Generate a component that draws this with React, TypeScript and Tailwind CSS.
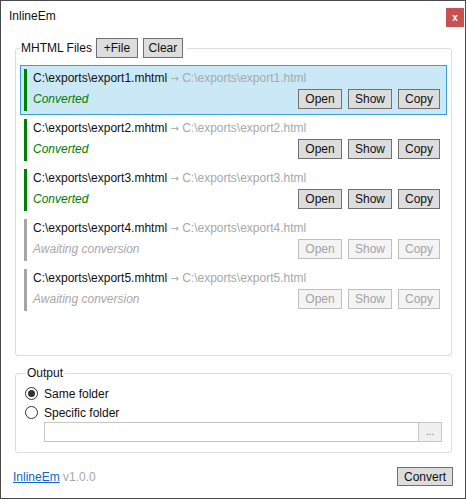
import { useState } from "react";

type Job = { name: string; done: boolean };

const JOBS: Job[] = [
  { name: "export1", done: true },
  { name: "export2", done: true },
  { name: "export3", done: true },
  { name: "export4", done: false },
  { name: "export5", done: false },
];

function WinButton({
  label,
  w,
  disabled,
}: {
  label: string;
  w: string;
  disabled?: boolean;
}) {
  return (
    <button
      disabled={disabled}
      className={`${w} h-[20px] border text-[12px] leading-[16px] ${
        disabled
          ? "border-[#bfbfbf] bg-[#f4f4f4] text-[#a3a3a3]"
          : "border-[#707070] bg-[#dddddd] text-[#111]"
      }`}
    >
      {label}
    </button>
  );
}

function Radio({ on, label }: { on: boolean; label: string }) {
  return (
    <div className="flex h-[19px] items-center gap-[6px]">
      <span className="flex h-[13px] w-[13px] items-center justify-center rounded-full border border-[#333] bg-white">
        {on && <span className="h-[7px] w-[7px] rounded-full bg-[#333]" />}
      </span>
      <span className="text-[12px] leading-[16px] text-[#111]">{label}</span>
    </div>
  );
}

export default function App() {
  const [selected] = useState(0);

  return (
    <div className="flex h-[499px] w-[466px] flex-col border border-[#4a4a4a] bg-white font-['Liberation_Sans',Arial,sans-serif] text-[12px] text-[#111]">
      {/* title bar */}
      <div className="flex h-[37px] shrink-0 items-start justify-between pl-[8px] pr-[1px] pt-[7px]">
        <span className="leading-[16px]">InlineEm</span>
        <button className="flex h-[19px] w-[18px] items-center justify-center bg-[#c75050] text-[10px] font-bold leading-none text-white">
          x
        </button>
      </div>

      {/* files */}
      <fieldset className="ml-[14px] h-[318px] w-[437px] shrink-0 rounded-[3px] border border-[#d5dfe5] px-[4px] pt-[7px]">
        <legend className="flex items-center gap-[4px] px-[1px]">
          <span className="leading-[16px]">MHTML Files</span>
          <span className="flex gap-[5px] pr-[3px]">
            <WinButton label="+File" w="w-[42px]" />
            <WinButton label="Clear" w="w-[40px]" />
          </span>
        </legend>

        <div className="flex flex-col">
          {JOBS.map((job, i) => {
            const sel = i === selected;
            return (
              <div
                key={job.name}
                className={`flex h-[50px] gap-[6px] border px-[3px] py-[3px] ${
                  sel ? "border-[#3a9fd9] bg-[#cbe8f6]" : "border-transparent"
                }`}
              >
                <span className={`w-[3px] shrink-0 ${job.done ? "bg-[#008000]" : "bg-[#a6a6a6]"}`} />
                <div className="flex flex-1 flex-col pr-[3px]">
                  <div className="mt-[1px] whitespace-nowrap leading-[16px]">
                    C:\exports\{job.name}.mhtml
                    <span className="text-[#a8a8a8]">
                      {" "}
                      <span className="font-['DejaVu_Sans',sans-serif] text-[10px]">→</span> C:\exports\{job.name}.html
                    </span>
                  </div>
                  <div className="mt-[2px] flex items-center justify-between">
                    <span
                      className={`italic leading-[16px] ${job.done ? "text-[#008000]" : "text-[#a8a8a8]"}`}
                    >
                      {job.done ? "Converted" : "Awaiting conversion"}
                    </span>
                    <div className="flex gap-[6px]">
                      <WinButton label="Open" w="w-[44px]" disabled={!job.done} />
                      <WinButton label="Show" w="w-[44px]" disabled={!job.done} />
                      <WinButton label="Copy" w="w-[42px]" disabled={!job.done} />
                    </div>
                  </div>
                </div>
              </div>
            );
          })}
        </div>
      </fieldset>

      {/* output */}
      <fieldset className="ml-[14px] mt-[9px] w-[437px] shrink-0 rounded-[3px] border border-[#d5dfe5] pb-[10px] pl-[9px] pr-[9px] pt-[3px]">
        <legend className="px-[2px] leading-[16px]">Output</legend>
        <Radio on label="Same folder" />
        <Radio on={false} label="Specific folder" />
        <div className="ml-[19px] flex h-[20px]">
          <div className="flex-1 border border-[#c6c6c6] bg-white" />
          <button className="w-[23px] border border-l-0 border-[#c6c6c6] bg-[#f0f0f0] text-[10px] leading-none text-[#777]">
            ...
          </button>
        </div>
      </fieldset>

      {/* footer */}
      <div className="mt-[14px] flex items-center justify-between px-[12px]">
        <div className="leading-[16px]">
          <a href="#" className="text-[#0c67d0] underline">
            InlineEm
          </a>
          <span className="text-[#a8a8a8]"> v1.0.0</span>
        </div>
        <button className="h-[19px] w-[56px] border border-[#707070] bg-[#dddddd] leading-[16px]">
          Convert
        </button>
      </div>
    </div>
  );
}
